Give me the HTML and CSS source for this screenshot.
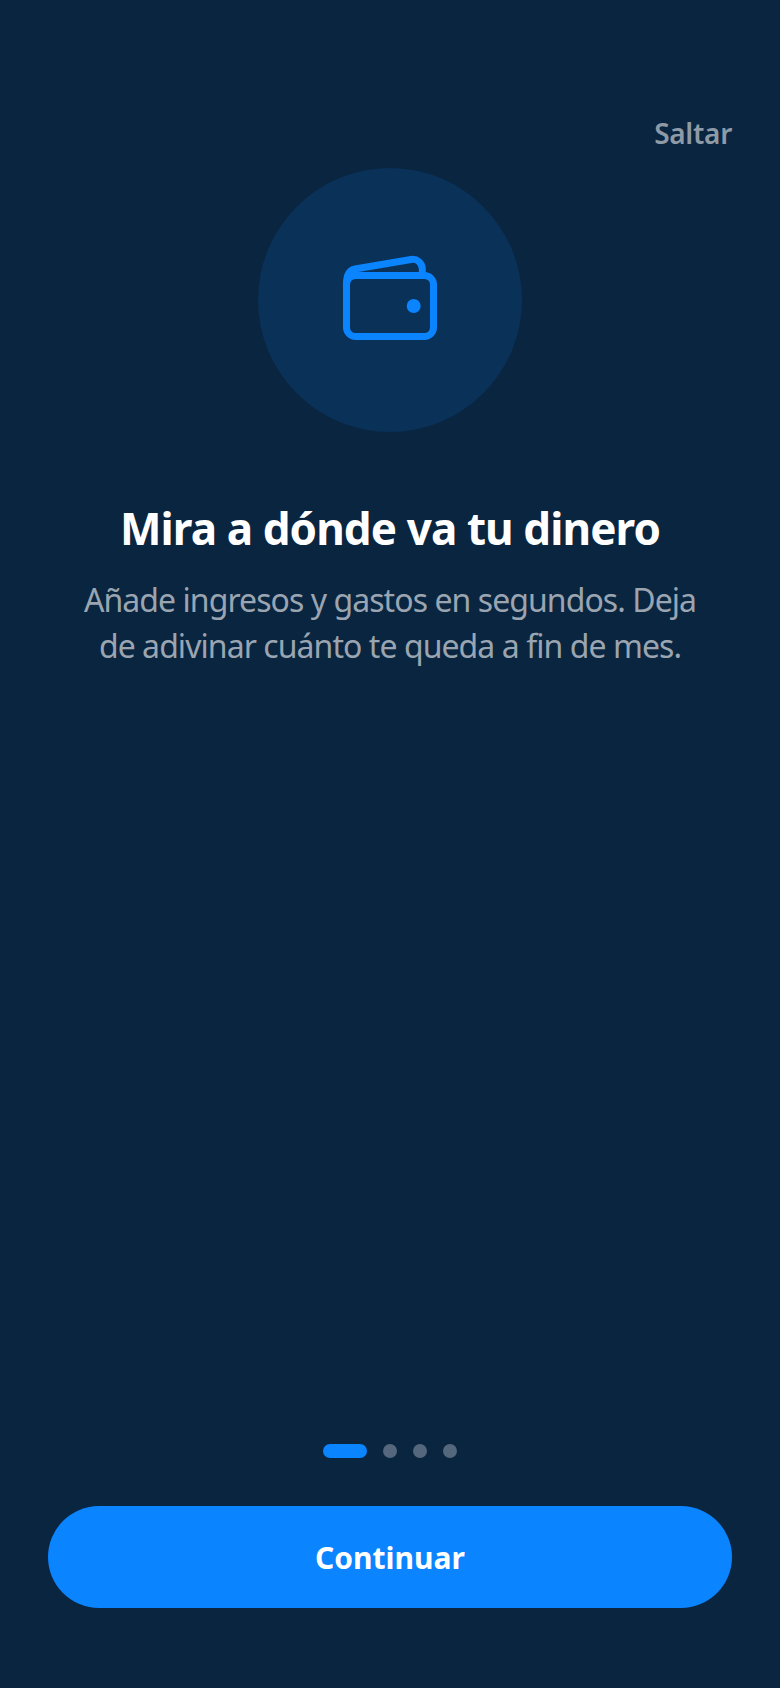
FILE: index.html
```html
<!DOCTYPE html>
<html lang="es">
<head>
    <meta charset="UTF-8">
    <meta name="viewport" content="width=device-width, initial-scale=1.0">
    <title>Onboarding</title>
    <link rel="stylesheet" href="styles.css">
</head>
<body>
    <div class="screen">
        <div class="skip-row">
            <span class="skip">Saltar</span>
        </div>

        <div class="slide">
            <div class="icon-circle">
                <svg class="wallet" width="120" height="120" viewBox="0 0 120 120" fill="none" stroke="#0a84ff" stroke-width="7" stroke-linecap="round" stroke-linejoin="round">
                    <path d="M16.5 44C16.5 35 20 30 25 29L81 19.5C87 18.5 92.3 23 92.3 29V35.5"/>
                    <rect x="16.5" y="35.5" width="87" height="61" rx="9"/>
                    <circle cx="83.7" cy="66" r="7" fill="#0a84ff" stroke="none"/>
                </svg>
            </div>
            <h1>Mira a dónde va tu dinero</h1>
            <p>Añade ingresos y gastos en segundos. Deja de adivinar cuánto te queda a fin de mes.</p>
        </div>

        <div class="dots">
            <span class="dot active"></span>
            <span class="dot"></span>
            <span class="dot"></span>
            <span class="dot"></span>
        </div>

        <button class="continue">Continuar</button>
    </div>
</body>
</html>
```

FILE: styles.css
```css
* {
    box-sizing: border-box;
}
body {
    margin: 0;
    background-color: #0a2540;
    font-family: "Noto Sans", sans-serif;
}
.screen {
    height: 1688px;
    padding: 114px 48px 80px;
    display: flex;
    flex-direction: column;
}
.skip-row {
    display: flex;
    justify-content: flex-end;
}
.skip {
    font-size: 28px;
    line-height: 38px;
    font-weight: 600;
    letter-spacing: -0.3px;
    color: #8e9aa6;
}
.slide {
    flex: 1;
    display: flex;
    flex-direction: column;
    align-items: center;
    padding-top: 16px;
}
.icon-circle {
    width: 264px;
    height: 264px;
    border-radius: 50%;
    background-color: #0a3158;
    display: flex;
    align-items: center;
    justify-content: center;
}
h1 {
    margin: 67px 0 0;
    font-size: 44px;
    line-height: 58px;
    font-weight: 700;
    letter-spacing: -0.9px;
    color: #ffffff;
    text-align: center;
}
p {
    margin: 20px 0 0;
    width: 640px;
    font-size: 32px;
    line-height: 46px;
    letter-spacing: -0.94px;
    color: #9aa5b1;
    text-align: center;
}
.dots {
    display: flex;
    justify-content: center;
    align-items: center;
    gap: 16px;
    margin-bottom: 48px;
}
.dot {
    width: 14px;
    height: 14px;
    border-radius: 50%;
    background-color: #54677c;
}
.dot.active {
    width: 44px;
    border-radius: 7px;
    background-color: #0a84ff;
}
.continue {
    height: 102px;
    width: 100%;
    border: none;
    border-radius: 51px;
    background-color: #0a84ff;
    color: #ffffff;
    font-family: inherit;
    font-size: 30px;
    font-weight: 700;
}
```
